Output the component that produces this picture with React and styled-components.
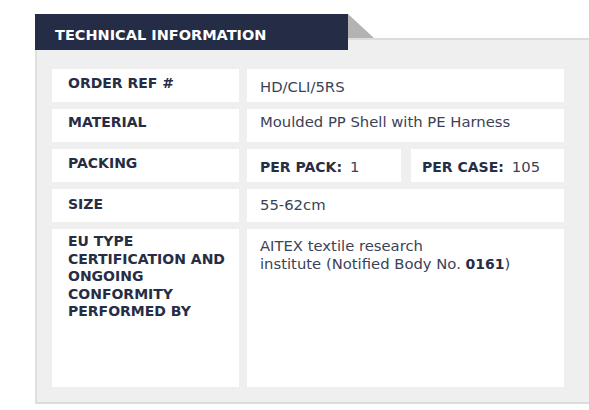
import React from "react";
import styled, { createGlobalStyle } from "styled-components";

const GlobalStyle = createGlobalStyle`
  html, body { margin: 0; padding: 0; background: #ffffff; overflow: hidden; }
  body { font-family: "DejaVu Sans", "Liberation Sans", sans-serif; }
`;

const Page = styled.div`
  width: 589px;
  height: 410px;
  padding: 14px 0 0 35px;
  box-sizing: border-box;
  overflow: hidden;
`;

const TabRow = styled.div`
  display: flex;
  align-items: flex-start;
  height: 24px;
  position: relative;
  z-index: 1;
`;

const Tab = styled.div`
  width: 313px;
  height: 36px;
  box-sizing: border-box;
  background: #252c45;
  color: #ffffff;
  font-weight: 700;
  font-size: 14.5px;
  line-height: 18px;
  padding: 12px 0 0 20px;
  white-space: nowrap;
`;

const Corner = styled.svg`
  display: block;
  flex: none;
`;

const Panel = styled.div`
  width: 580px;
  box-sizing: border-box;
  background: #efefef;
  border-top: 2px solid #dcdcdc;
  border-left: 2px solid #e0e0e0;
  border-bottom: 2px solid #dcdcdc;
  padding: 29px 0 15px 15px;
`;

const Grid = styled.div`
  display: grid;
  grid-template-columns: 187px 317px;
  grid-template-rows: 33px 33px 33px 33px 158px;
  column-gap: 8px;
  row-gap: 7px;
`;

const Label = styled.div`
  background: #ffffff;
  color: #262d45;
  font-weight: 700;
  font-size: 14px;
  line-height: 17.5px;
  padding: ${(p) => p.$top}px 8px 0 16px;
  text-transform: uppercase;
`;

const Value = styled.div`
  background: #ffffff;
  color: #3b4256;
  font-size: 14.8px;
  line-height: 18px;
  padding: ${(p) => p.$top}px 8px 0 ${(p) => p.$left || 13}px;
  white-space: nowrap;
`;

const Split = styled.div`
  display: grid;
  grid-template-columns: 154px 153px;
  column-gap: 10px;
`;

const Strong = styled.b`
  font-weight: 700;
  font-size: 14px;
  color: #262d45;
  margin-right: ${(p) => p.$gap || 0}px;
`;

export default function App() {
  return (
    <>
      <GlobalStyle />
      <Page>
        <TabRow>
          <Tab>TECHNICAL INFORMATION</Tab>
          <Corner width="26" height="24" viewBox="0 0 26 24">
            <polygon points="0,0 26,24 0,24" fill="#b3b3b3" />
          </Corner>
        </TabRow>
        <Panel>
          <Grid>
            <Label $top={6}>Order Ref #</Label>
            <Value $top={9}>HD/CLI/5RS</Value>
            <Label $top={5}>Material</Label>
            <Value $top={4}>Moulded PP Shell with PE Harness</Value>
            <Label $top={6}>Packing</Label>
            <Split>
              <Value $top={9}>
                <Strong $gap={8}>PER PACK:</Strong>1
              </Value>
              <Value $top={9} $left={11}>
                <Strong $gap={8}>PER CASE:</Strong>105
              </Value>
            </Split>
            <Label $top={7}>Size</Label>
            <Value $top={7}>55-62cm</Value>
            <Label $top={4}>
              EU Type Certification and Ongoing Conformity Performed By
            </Label>
            <Value $top={8}>
              AITEX textile research
              <br />
              institute (Notified Body No. <Strong>0161</Strong>)
            </Value>
          </Grid>
        </Panel>
      </Page>
    </>
  );
}
